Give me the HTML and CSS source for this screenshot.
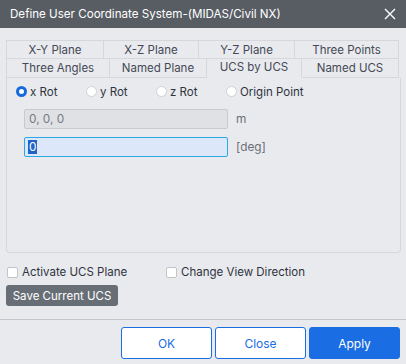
FILE: index.html
```html
<!DOCTYPE html>
<html lang="en">
<head>
  <meta charset="UTF-8">
  <title>Define User Coordinate System</title>
  <link rel="stylesheet" href="styles.css">
</head>
<body>

<div class="dialog">
  <div class="titlebar">
    <span class="title">Define User Coordinate System-(MIDAS/Civil NX)</span>
    <span class="close">
      <svg width="12" height="12" viewBox="0 0 12 12"><path d="M1 1L11 11M11 1L1 11" stroke="#fff" stroke-width="1.4" fill="none"/></svg>
    </span>
  </div>

  <div class="content">
    <div class="tabs">
      <div class="tab-row">
        <div class="tab w98">X-Y Plane</div>
        <div class="tab w95">X-Z Plane</div>
        <div class="tab w96">Y-Z Plane</div>
        <div class="tab w104">Three Points</div>
      </div>
      <div class="tab-row">
        <div class="tab w104">Three Angles</div>
        <div class="tab w97">Named Plane</div>
        <div class="tab w95 active">UCS by UCS</div>
        <div class="tab w97">Named UCS</div>
      </div>
    </div>

    <div class="panel">
      <div class="radios">
        <label class="radio"><span class="dot checked"></span>x Rot</label>
        <label class="radio"><span class="dot"></span>y Rot</label>
        <label class="radio"><span class="dot"></span>z Rot</label>
        <label class="radio last"><span class="dot"></span>Origin Point</label>
      </div>
      <div class="field">
        <div class="input disabled">0, 0, 0</div>
        <span class="unit">m</span>
      </div>
      <div class="field">
        <div class="input focused"><span class="sel">0</span></div>
        <span class="unit">[deg]</span>
      </div>
    </div>

    <div class="checks">
      <label class="check w159"><span class="box"></span>Activate UCS Plane</label>
      <label class="check"><span class="box"></span>Change View Direction</label>
    </div>

    <button class="save">Save Current UCS</button>
  </div>

  <div class="footer">
    <button class="btn">OK</button>
    <button class="btn">Close</button>
    <button class="btn primary">Apply</button>
  </div>
</div>

</body>
</html>
```

FILE: styles.css
```css
body {
  margin: 0;
  padding: 0;
  background: #e9eaee;
  font-family: 'Inter', 'Noto Sans', sans-serif;
  color: #2f3440;
}
.dialog {
  width: 406px;
  height: 364px;
  display: flex;
  flex-direction: column;
}
.titlebar {
  height: 28px;
  background: #585d64;
  color: #fff;
  display: flex;
  align-items: center;
  justify-content: space-between;
  padding: 0 8px 0 10px;
  font-size: 11.6px;
}
.close {
  display: flex;
  align-items: center;
  padding-right: 2px;
}
.content {
  padding: 12px 6px 0 6px;
  height: 279px;
  box-sizing: border-box;
}
.tab-row {
  display: flex;
}
.tab {
  height: 19px;
  box-sizing: border-box;
  border: 1px solid #d6d7db;
  border-left: none;
  text-align: center;
  font-size: 11.5px;
  line-height: 18px;
  color: #444955;
}
.tab-row .tab:first-child {
  border-left: 1px solid #d6d7db;
}
.tab-row + .tab-row .tab {
  border-top: none;
}
.tab.active {
  border-top: 2px solid #33363b;
  margin-top: -1px;
  height: 20px;
  border-bottom-color: transparent;
}
.w95 { width: 95px; }
.w96 { width: 96px; }
.w97 { width: 97px; }
.w98 { width: 98px; }
.w104 { width: 104px; }
.panel {
  height: 175px;
  box-sizing: border-box;
  border: 1px solid #d6d7db;
  border-top: none;
  border-radius: 0 0 4px 4px;
  margin-right: -1px;
  padding: 7px 0 0 9px;
}
.radios {
  display: flex;
  height: 13px;
  align-items: center;
  font-size: 11.5px;
}
.radio {
  width: 70px;
  display: flex;
  align-items: center;
  gap: 3px;
}
.radio.last {
  width: auto;
}
.dot {
  width: 11px;
  height: 11px;
  box-sizing: border-box;
  border-radius: 50%;
  background: #fff;
  border: 1px solid #cfd0d4;
}
.dot.checked {
  border: 3px solid #1769e0;
}
.field {
  display: flex;
  align-items: center;
  gap: 8px;
  margin-left: 8px;
  margin-top: 11px;
  font-size: 11.8px;
}
.field + .field {
  margin-top: 8px;
}
.input {
  width: 204px;
  height: 20px;
  box-sizing: border-box;
  border: 1px solid #c9cacd;
  border-radius: 2px;
  padding: 0 4px;
  line-height: 18px;
  font-size: 11.8px;
}
.input.disabled {
  background: #e0e1e5;
  color: #777b82;
}
.input.focused {
  background: #dce8f9;
  border-color: #2aa9e6;
  color: #2f3440;
  padding-left: 3px;
}
.sel {
  background: #1f64c8;
  color: #fff;
  padding: 0 1px;
}
.unit {
  color: #6a6f78;
}
.checks {
  display: flex;
  margin-top: 12px;
  margin-left: 1px;
  font-size: 11.5px;
  height: 14px;
  align-items: center;
}
.check {
  display: flex;
  align-items: center;
  gap: 4px;
}
.w159 { width: 159px; }
.box {
  width: 11px;
  height: 11px;
  box-sizing: border-box;
  background: #fff;
  border: 1px solid #c3c4c8;
  border-radius: 2px;
}
.save {
  margin-top: 6px;
  display: block;
  width: 112px;
  height: 21px;
  border: none;
  border-radius: 3px;
  background: #686e76;
  color: #fff;
  font-family: inherit;
  font-size: 11.5px;
  padding: 0;
}
.footer {
  border-top: 1px solid #c4c5c9;
  margin-top: 12px;
  display: flex;
  justify-content: flex-end;
  gap: 3px;
  padding: 7px 6px 0 0;
}
.btn {
  width: 91px;
  height: 32px;
  box-sizing: border-box;
  border: 1px solid #1a6de2;
  border-radius: 3px;
  background: #fff;
  color: #1a6de2;
  font-family: inherit;
  font-size: 12px;
}
.btn.primary {
  background: #1a6de2;
  color: #fff;
}
```
